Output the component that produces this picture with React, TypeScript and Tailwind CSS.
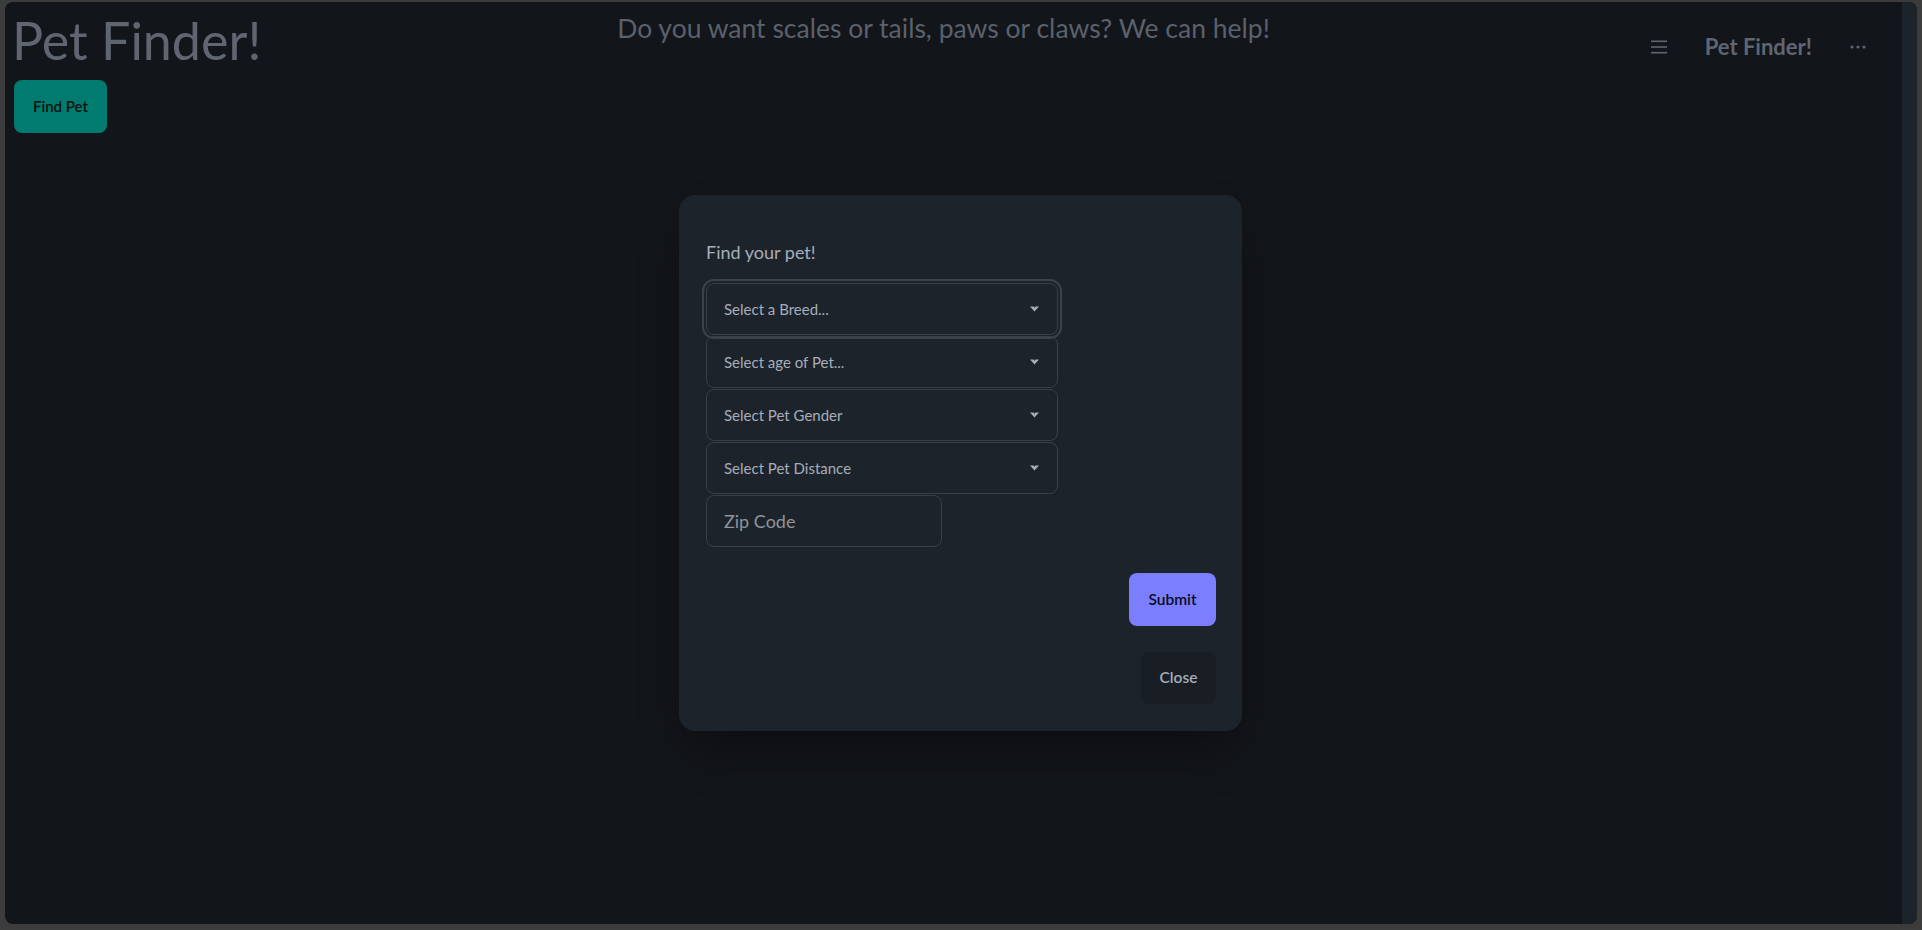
import React from "react";

function Caret() {
  return (
    <svg width="9" height="6" viewBox="0 0 9 6" className="shrink-0">
      <polygon points="0,0.5 3.6,0.5 4.5,1.8 5.4,0.5 9,0.5 4.5,5.5" fill="#a6adbb" />
    </svg>
  );
}

function SelectBox({ label, focused }: { label: string; focused?: boolean }) {
  return (
    <div
      className={
        "flex h-[52px] w-[352px] items-center justify-between rounded-lg border border-[#383f47] pl-[17px] pr-[18px] text-[15px] text-[#a6adbb] " +
        (focused ? "outline-2 outline-offset-2 outline-[#3b424b]" : "")
      }
    >
      <span>{label}</span>
      <Caret />
    </div>
  );
}

export default function App() {
  return (
    <div className="relative h-[930px] w-[1922px] overflow-hidden bg-[#3c3c3c] pb-[6px] pl-[5px] pr-[5px] pt-[2px] font-['Lato','Liberation_Sans',sans-serif]">
      <div className="flex h-full overflow-hidden rounded-lg bg-[#121519]">
        <div className="flex-1">
          <div className="flex items-start">
            <div className="w-[300px] pl-[7px] pt-[12px]">
              <h1 className="text-[52px] leading-none text-[#5f6571] whitespace-nowrap">Pet Finder!</h1>
              <button className="ml-[2px] mt-[14px] h-[53px] w-[93px] rounded-lg bg-[#017b6f] text-[15px] font-semibold text-[#04120f]">
                Find Pet
              </button>
            </div>
            <div className="flex-1 pt-[13px] text-center text-[26.5px] leading-none text-[#5b616b] whitespace-nowrap">
              Do you want scales or tails, paws or claws? We can help!
            </div>
            <div className="flex w-[320px] items-center justify-end pr-[36px] pt-[34px] text-[#5f6571]">
              <svg width="16" height="14" viewBox="0 0 16 14" className="mr-[38px]">
                <rect x="0" y="0.5" width="16" height="1.6" fill="#5f6571" />
                <rect x="0" y="6.2" width="16" height="1.6" fill="#5f6571" />
                <rect x="0" y="11.9" width="16" height="1.6" fill="#5f6571" />
              </svg>
              <span className="text-[22px] font-bold leading-none whitespace-nowrap">Pet Finder!</span>
              <svg width="16" height="4" viewBox="0 0 16 4" className="ml-[38px]">
                <circle cx="2" cy="2" r="1.6" fill="#5f6571" />
                <circle cx="8" cy="2" r="1.6" fill="#5f6571" />
                <circle cx="14" cy="2" r="1.6" fill="#5f6571" />
              </svg>
            </div>
          </div>
        </div>
        <div className="w-[15px] bg-[#1d232a]" />
      </div>

      <div className="absolute inset-0 flex items-center justify-center pb-[4px] pr-[1px]">
        <div className="flex w-[563px] flex-col rounded-2xl bg-[#1d232a] pb-[27px] pl-[27px] pr-[26px] pt-[43px] shadow-[0_25px_50px_-12px_rgba(0,0,0,0.35)]">
          <h3 className="text-[18px] leading-[28px] text-[#a6adbb]">Find your pet!</h3>
          <div className="mt-[17px] flex flex-col gap-px">
            <SelectBox label="Select a Breed..." focused />
            <SelectBox label="Select age of Pet..." />
            <SelectBox label="Select Pet Gender" />
            <SelectBox label="Select Pet Distance" />
            <div className="flex h-[52px] w-[236px] items-center rounded-lg border border-[#383f47] pl-[17px] text-[18px] text-[#8e949e]">
              Zip Code
            </div>
          </div>
          <button className="mt-[26px] h-[53px] w-[87px] self-end rounded-lg bg-[#7b7fff] text-[15.5px] font-semibold text-[#0b0c24]">
            Submit
          </button>
          <button className="mt-[26px] h-[52px] w-[75px] self-end rounded-lg bg-[#191e24] text-[15.5px] font-semibold text-[#a6adbb]">
            Close
          </button>
        </div>
      </div>
    </div>
  );
}
